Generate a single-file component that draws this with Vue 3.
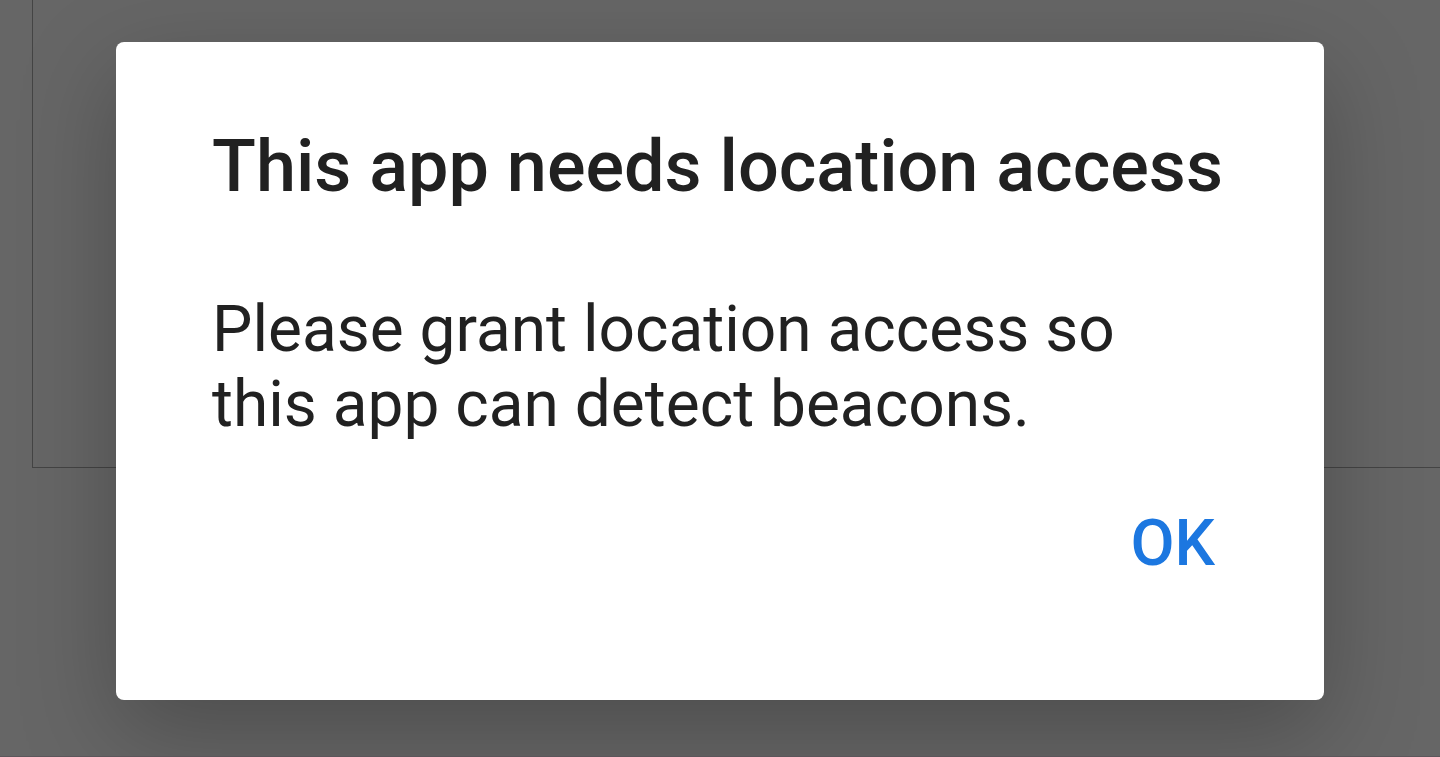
<script setup>
import { ref } from 'vue'

const open = ref(true)
</script>

<template>
  <main class="screen">
    <div class="panel" aria-hidden="true"></div>
    <div v-if="open" class="overlay">
      <section class="dialog" role="alertdialog" aria-modal="true" aria-labelledby="title" aria-describedby="message">
        <h1 id="title" class="title">This app needs location access</h1>
        <p id="message" class="message">Please grant location access so this app can detect beacons.</p>
        <footer class="actions">
          <button type="button" class="ok" @click="open = false">OK</button>
        </footer>
      </section>
    </div>
  </main>
</template>

<style>
body {
  margin: 0;
  background: #666666;
}
</style>

<style scoped>
.screen {
  position: relative;
  min-height: 100vh;
  box-sizing: border-box;
  padding-left: 32px;
  overflow: hidden;
  background: #666666;
  border-bottom: 1px solid #5c565b;
  font-family: Roboto, "Noto Sans", sans-serif;
}

.panel {
  height: 467px;
  border-left: 1px solid #444444;
  border-bottom: 1px solid #444444;
}

.overlay {
  position: absolute;
  inset: 0;
  padding: 42px 116px 56px;
}

.dialog {
  display: flex;
  flex-direction: column;
  box-sizing: border-box;
  padding: 80px 96px 100px;
  border-radius: 8px;
  background: #ffffff;
  box-shadow: 0 32px 96px rgba(0, 0, 0, 0.25);
  color: #212121;
}

.title {
  margin: 0;
  font-size: 72px;
  font-weight: 500;
  line-height: 90px;
  white-space: nowrap;
}

.message {
  margin: 80px 0 0;
  font-size: 64px;
  font-weight: 400;
  line-height: 75px;
}

.actions {
  display: flex;
  justify-content: flex-end;
  margin-top: 46px;
}

.ok {
  margin: 0;
  padding: 16px 13px;
  border: 0;
  background: none;
  color: #1c77e0;
  font: inherit;
  font-size: 64px;
  font-weight: 500;
  line-height: 80px;
  cursor: pointer;
}
</style>
